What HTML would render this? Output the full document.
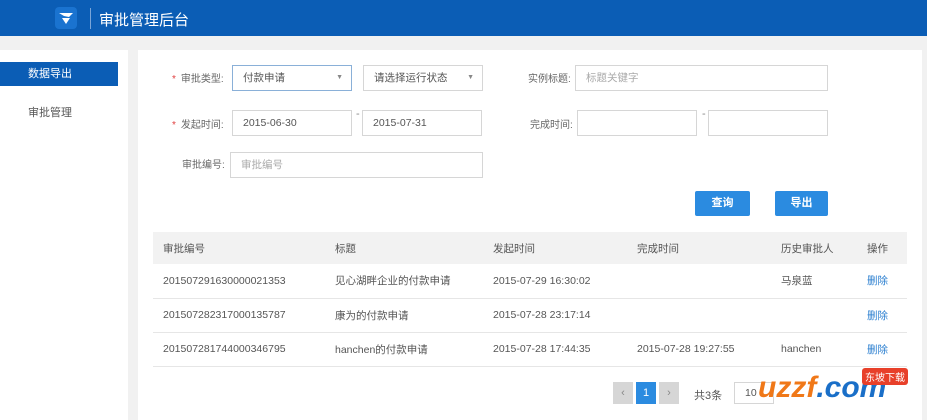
<!DOCTYPE html>
<html><head><meta charset="utf-8"><style>
*{margin:0;padding:0;box-sizing:border-box}
body{width:927px;height:420px;overflow:hidden;background:#f1f1f1;font-family:"Liberation Sans","Noto Sans CJK SC",sans-serif;font-size:11px;color:#555;position:relative}
.hdr{position:absolute;left:0;top:0;width:927px;height:36px;background:#0b5db5}
.logo{position:absolute;left:55px;top:7px;width:22px;height:22px;background:#1a73d0;border-radius:4px}
.sep{position:absolute;left:90px;top:8px;width:1px;height:21px;background:#7aa5d8}
.title{position:absolute;left:99px;top:9px;color:#fff;font-size:15px}
.side{position:absolute;left:0;top:50px;width:128px;height:370px;background:#fff}
.side .act{position:absolute;left:0;top:12px;width:118px;height:24px;background:#0b5db5;color:#fff;padding-left:28px;line-height:24px}
.side .it{position:absolute;left:28px;top:54px;color:#555}
.main{position:absolute;left:138px;top:50px;width:784px;height:370px;background:#fff}
.a{position:absolute}
.lbl{position:absolute;color:#666;font-size:10px}
.star{color:#e04040;margin-right:5px}
.inp{position:absolute;height:26px;border:1px solid #d6d6d6;background:#fff;padding-left:10px;line-height:24px;font-size:10.5px;color:#555}
.inp.ph{color:#aaa}
.arr{position:absolute;right:8px;top:0;font-size:7px;color:#888}
.btn{position:absolute;height:25px;width:55px;background:#2b8be0;color:#fff;font-weight:bold;text-align:center;line-height:25px;border-radius:2px}
table{position:absolute;left:15px;top:182px;width:754px;border-collapse:collapse;font-size:10.5px;table-layout:fixed}
th{background:#f2f2f2;height:32px;font-weight:normal;text-align:left;color:#555}
td{height:34px;border-bottom:1px solid #e6e6e6;color:#555}
th:first-child,td:first-child{padding-left:10px}
.del{color:#2b7fd0}
.pg{position:absolute;top:332px;height:22px;background:#d6d6d6;width:20px;text-align:center;line-height:22px;color:#888}
</style></head><body>
<div class="hdr"><div class="logo"><svg width="22" height="22" viewBox="0 0 22 22"><path d="M4 6 L18 6 L14 10 L9 9 Z M7 11 L15 11 L11 17 Z" fill="#fff"/></svg></div><div class="sep"></div><div class="title">审批管理后台</div></div>
<div class="side"><div class="act">数据导出</div><div class="it">审批管理</div></div>
<div class="main">
<div class="lbl" style="left:34px;top:20px"><span class="star">*</span>审批类型:</div>
<div class="inp" style="left:94px;top:15px;width:120px;border-color:#8ab0d8">付款申请<span class="arr">▼</span></div>
<div class="inp" style="left:225px;top:15px;width:120px">请选择运行状态<span class="arr">▼</span></div>
<div class="lbl" style="left:390px;top:20px">实例标题:</div>
<div class="inp ph" style="left:437px;top:15px;width:253px">标题关键字</div>
<div class="lbl" style="left:34px;top:66px"><span class="star">*</span>发起时间:</div>
<div class="inp" style="left:94px;top:60px;width:120px">2015-06-30</div>
<div class="a" style="left:218px;top:58px;color:#888">-</div>
<div class="inp" style="left:224px;top:60px;width:120px">2015-07-31</div>
<div class="lbl" style="left:392px;top:66px">完成时间:</div>
<div class="inp" style="left:439px;top:60px;width:120px"></div>
<div class="a" style="left:564px;top:58px;color:#888">-</div>
<div class="inp" style="left:570px;top:60px;width:120px"></div>
<div class="lbl" style="left:44px;top:106px">审批编号:</div>
<div class="inp ph" style="left:92px;top:102px;width:253px">审批编号</div>
<div class="btn" style="left:557px;top:141px">查询</div>
<div class="btn" style="left:637px;top:141px;width:53px">导出</div>
<table>
<colgroup><col style="width:182px"><col style="width:158px"><col style="width:144px"><col style="width:144px"><col style="width:86px"><col></colgroup>
<tr><th>审批编号</th><th>标题</th><th>发起时间</th><th>完成时间</th><th>历史审批人</th><th>操作</th></tr>
<tr><td>201507291630000021353</td><td>见心湖畔企业的付款申请</td><td>2015-07-29 16:30:02</td><td></td><td>马泉蓝</td><td class="del">删除</td></tr>
<tr><td>201507282317000135787</td><td>康为的付款申请</td><td>2015-07-28 23:17:14</td><td></td><td></td><td class="del">删除</td></tr>
<tr><td>201507281744000346795</td><td>hanchen的付款申请</td><td>2015-07-28 17:44:35</td><td>2015-07-28 19:27:55</td><td>hanchen</td><td class="del">删除</td></tr>
</table>
<div class="pg" style="left:475px">‹</div>
<div class="pg" style="left:498px;background:#2b8be0;color:#fff">1</div>
<div class="pg" style="left:521px">›</div>
<div class="a" style="left:556px;top:337px">共3条</div>
<div class="inp" style="left:596px;top:332px;width:40px;height:22px;line-height:20px">10</div>
</div>
<div class="a" style="left:758px;top:368px;font-size:30px;font-weight:bold;color:#f07818;font-style:italic;line-height:40px">uzzf<span style="color:#1a6fc8">.com</span></div>
<div class="a" style="left:862px;top:368px;background:#e8402a;color:#fff;font-size:10px;padding:1px 3px;border-radius:3px">东坡下载</div>
</body></html>
